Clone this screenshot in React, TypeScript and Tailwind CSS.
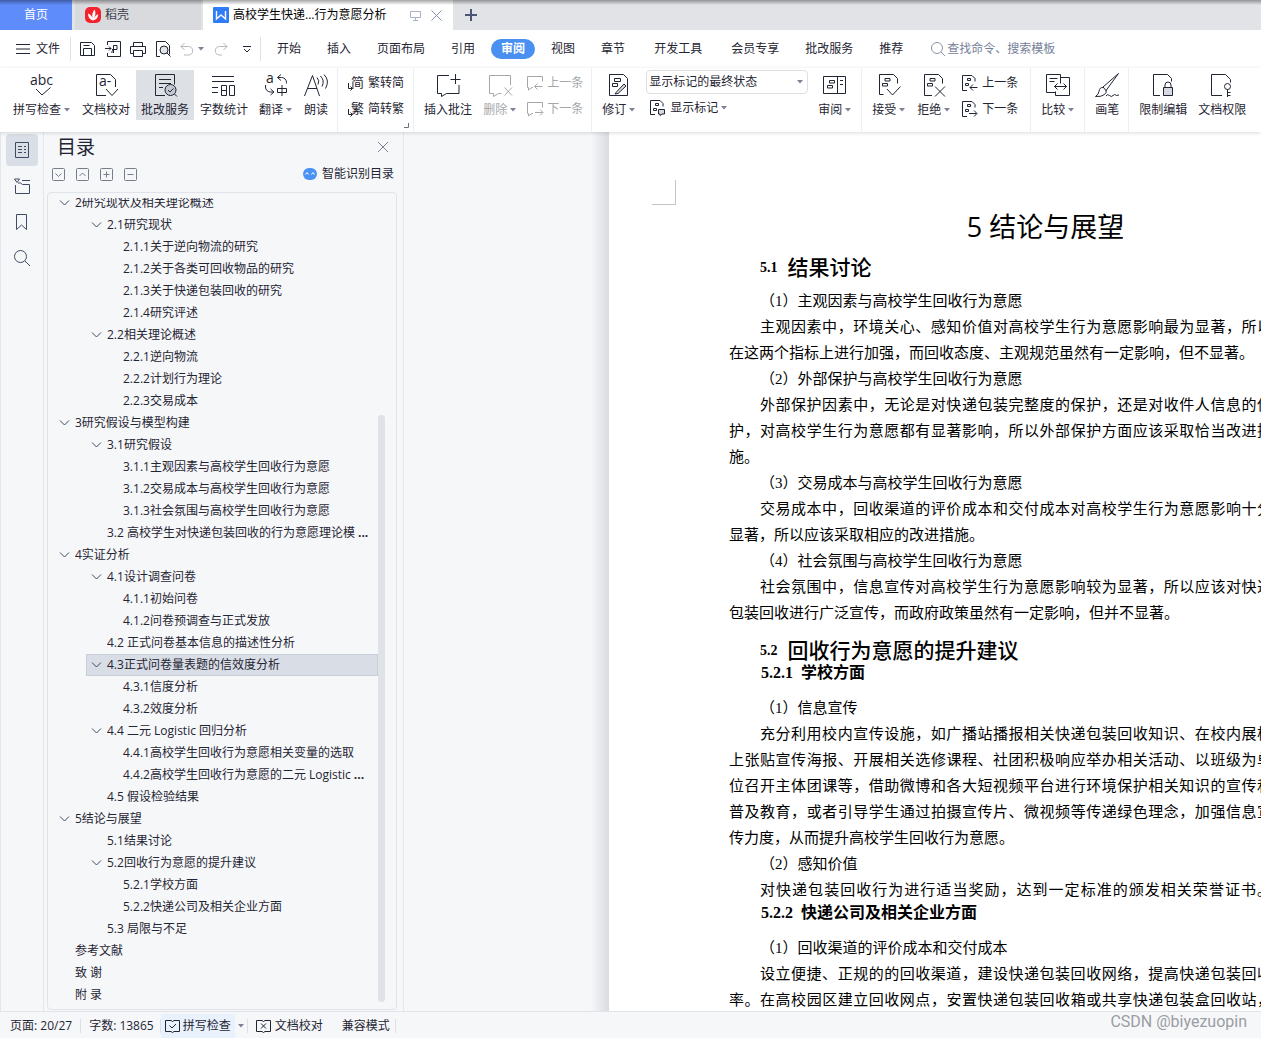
import type { ReactNode } from 'react';
import { useState } from 'react';

const tabs = ['开始', '插入', '页面布局', '引用', '审阅', '视图', '章节', '开发工具', '会员专享', '批改服务', '推荐'];

type Node = { level: number; text: string; open?: boolean; cut?: boolean };

const outline: Node[] = [
    { level: 1, text: '2研究现状及相关理论概述', open: true },
    { level: 2, text: '2.1研究现状', open: true },
    { level: 3, text: '2.1.1关于逆向物流的研究' },
    { level: 3, text: '2.1.2关于各类可回收物品的研究' },
    { level: 3, text: '2.1.3关于快递包装回收的研究' },
    { level: 3, text: '2.1.4研究评述' },
    { level: 2, text: '2.2相关理论概述', open: true },
    { level: 3, text: '2.2.1逆向物流' },
    { level: 3, text: '2.2.2计划行为理论' },
    { level: 3, text: '2.2.3交易成本' },
    { level: 1, text: '3研究假设与模型构建', open: true },
    { level: 2, text: '3.1研究假设', open: true },
    { level: 3, text: '3.1.1主观因素与高校学生回收行为意愿' },
    { level: 3, text: '3.1.2交易成本与高校学生回收行为意愿' },
    { level: 3, text: '3.1.3社会氛围与高校学生回收行为意愿' },
    { level: 2, text: '3.2 高校学生对快递包装回收的行为意愿理论模', cut: true },
    { level: 1, text: '4实证分析', open: true },
    { level: 2, text: '4.1设计调查问卷', open: true },
    { level: 3, text: '4.1.1初始问卷' },
    { level: 3, text: '4.1.2问卷预调查与正式发放' },
    { level: 2, text: '4.2 正式问卷基本信息的描述性分析' },
    { level: 2, text: '4.3正式问卷量表题的信效度分析', open: true },
    { level: 3, text: '4.3.1信度分析' },
    { level: 3, text: '4.3.2效度分析' },
    { level: 2, text: '4.4 二元 Logistic 回归分析', open: true },
    { level: 3, text: '4.4.1高校学生回收行为意愿相关变量的选取' },
    { level: 3, text: '4.4.2高校学生回收行为意愿的二元 Logistic ', cut: true },
    { level: 2, text: '4.5 假设检验结果' },
    { level: 1, text: '5结论与展望', open: true },
    { level: 2, text: '5.1结果讨论' },
    { level: 2, text: '5.2回收行为意愿的提升建议', open: true },
    { level: 3, text: '5.2.1学校方面' },
    { level: 3, text: '5.2.2快递公司及相关企业方面' },
    { level: 2, text: '5.3 局限与不足' },
    { level: 1, text: '参考文献' },
    { level: 1, text: '致 谢' },
    { level: 1, text: '附 录' },
];

const indent: Record<number, string> = { 1: '', 2: 'ml-8', 3: 'ml-12' };

const Svg = ({ w = 24, h = 24, className = '', children }: { w?: number; h?: number; className?: string; children: ReactNode }) => (
    <svg width={w} height={h} viewBox={`0 0 ${w} ${h}`} fill="none" stroke="currentColor" strokeWidth={1} className={`shrink-0 overflow-visible ${className}`} aria-hidden="true">
        {children}
    </svg>
);

const Caret = () => (
    <Svg w={7} h={4} className="ml-[3px] text-[#7b8296]">
        <path d="M0 0h6l-3 3.5z" fill="currentColor" stroke="none" />
    </Svg>
);

/* Ribbon drawings, all on a 24px grid */
const icons = {
    spell: (
        <Svg>
            <text x="0" y="12" fontSize="14" fill="currentColor" stroke="none">abc</text>
            <path d="M6 16l6 6 8.5-7.5" />
        </Svg>
    ),
    proof: (
        <Svg>
            <path d="M12 22.5H2.5v-21h14l5 5v7.5M12 16l6 6.500 6-6.500" />
            <text x="5" y="13" fontSize="14" fill="currentColor" stroke="none">a-</text>
        </Svg>
    ),
    correct: (
        <Svg>
            <path d="M12 22.5H2.5v-21h19v10M6 6.5h12M6 10.5h12M6 14.5h4" />
            <circle cx="17.5" cy="17" r="5.5" fill="#c4c9d1" />
            <path d="M15 17l2 2 3.5-3.5M21.5 21l2.5 2.5" />
        </Svg>
    ),
    count: (
        <Svg>
            <path d="M0 3.5h22M0 8.5h22M0 14.5h6M0 19.5h6M9.500 12.5h5v10h-5zM9.500 17.5h5M17.5 12.5h5v10h-5z" />
        </Svg>
    ),
    translate: (
        <Svg>
            <text x="2" y="10" fontSize="14" fill="currentColor" stroke="none">a</text>
            <path d="M17 1.5l-3.500 3 3.5 3M13.5 4.5h4a5 5 0 0 1 5 5v1M1.5 12v2a5 5 0 0 0 5 5h3M6.5 16l3.5 3-3.5 3M13.5 15.5h9v4h-9zM18 12v11" />
        </Svg>
    ),
    read: (
        <Svg>
            <path d="M0.5 23l8-20.5 7 20.5M3.5 15.5h9.500M13 4.5q3 3 1 7M16.5 3q4.5 4.500 1.5 10.5M20 1.5q6 6 1.5 14" />
        </Svg>
    ),
    comment: (
        <Svg>
            <path d="M13 2.5H1.5v18h4v3l5-3h12.500V12M19.5 1v10M14.5 6.5h10" />
        </Svg>
    ),
    remove: (
        <Svg>
            <path d="M22.5 12V2.5h-21v18h4v3l5-3h3M16.5 14.500l7.500 8M24 14.5l-7.5 8" />
        </Svg>
    ),
    revise: (
        <Svg>
            <path d="M2.5 1.5h14l4 4v17h-18zM7.5 5.500h6v3h-6zM5.5 10.5h5v3h-5z" />
            <path d="M9 19.5l8-8.500 2 2-8 7.5-3 .5z" fill="#d6dae0" />
        </Svg>
    ),
    pane: (
        <Svg>
            <path d="M0.5 3.5h22v17h-22zM14.5 3.5v17M17 7.5h3M17 11.5h3M6.5 7.5h5v2.5h-5zM4.5 12.5h5v2.5h-5z" />
        </Svg>
    ),
    accept: (
        <Svg>
            <path d="M6.5 21.5h-4v-20h14l4 4v5M8 5.5h5v2.5H8zM5.5 10.5h5v2.5h-5zM10 16l5.5 6 8-8.5" />
        </Svg>
    ),
    reject: (
        <Svg>
            <path d="M10 22.5H2.5v-21h14l4 4v5M8 5.5h5v2.5H8zM5.5 10.5h5v2.5h-5zM13 13.5l10 10M23 13.5l-10 10" />
        </Svg>
    ),
    compare: (
        <Svg>
            <path d="M10 19.5H0.5v-18h14v9M14.500 4.5h9v18h-14v-4M3.5 5.500h8M3.5 8.5h5M8.5 13.500h12M11.5 10.5l-3 3 3 3M17.500 10.5l3 3-3 3" />
        </Svg>
    ),
    pen: (
        <Svg>
            <path d="M23.5 0.5L8 14l3 3.500 12.500-17zM8.500 14.500q-4-.5-4.5 4-.5 3-3.500 5 6 .5 9-2 2.500-2 1.500-4.5M11 23q1.500-2.500 3.500-.5t3.500 0 3.500 0l2.500-.5" />
        </Svg>
    ),
    lock: (
        <Svg>
            <path d="M9 22.5H2.5v-21h14l4 4v3" />
            <path d="M12.5 14.5h9v8h-9z" fill="#d6dae0" />
            <path d="M14 14.5v-2.5a3 3 0 0 1 6 0v2.5" />
        </Svg>
    ),
    rights: (
        <Svg>
            <path d="M12 22.5H1.500v-21h14l5 5v3" />
            <circle cx="17.5" cy="13.5" r="3" />
            <path d="M17.5 16.5v7.5M17.5 19.5h3M17.5 22.5h3" />
        </Svg>
    ),
};

const prevComment = <Svg w={16} h={16}><path d="M6 12.5H5l-3.500 2.500v-2.500h-1v-11h15v5M8 11.5h7.500M10.500 8.5l-3 3 3 3" /></Svg>;
const nextComment = <Svg w={16} h={16}><path d="M6 12.5H5l-3.500 2.500v-2.500h-1v-11h15v5M8 11.5h7.500M13 8.5l3 3-3 3" /></Svg>;
const prevChange = <Svg w={16} h={16}><path d="M5 15.5H0.5v-15h9.500l3 3v3M5.5 3.5h3v2h-3zM3.5 8.5h3v2h-3zM8 12.5h7.5M11 9.500l-3 3 3 3" /></Svg>;
const nextChange = <Svg w={16} h={16}><path d="M5 15.5H0.5v-15h9.500l3 3v3M5.5 3.5h3v2h-3zM3.5 8.5h3v2h-3zM7 12.5h7.5M12 9.500l3 3-3 3" /></Svg>;
const markup = <Svg w={16} h={16}><path d="M5 14.5H0.5v-14h9.500l3 3v3M5.5 3.5h3v2h-3zM3.5 8.5h3v2h-3z" /><path d="M8.5 9.5h6v4.500h-2.500l-2 1.500v-1.500h-1.500z" fill="#d6dae0" /></Svg>;

const script = (char: string) => (
    <Svg w={16} h={16}>
        <text x="3" y="12" fontSize="13" fill="currentColor" stroke="none">{char}</text>
        <path d="M0.5 8v5.500H4M2.500 11.5l2 2-2 2" />
    </Svg>
);

const Tool = ({ icon, label, caret, active, disabled }: { icon: ReactNode; label: string; caret?: boolean; active?: boolean; disabled?: boolean }) => (
    <button disabled={disabled} className={`flex flex-col items-center gap-1 shrink-0 h-[50px] px-[5px] pt-[3px] ${active ? 'bg-[#dde1e6]' : ''} ${disabled ? 'text-[#a5a7ab]' : ''}`}>
        {icon}
        <span className="flex items-center whitespace-nowrap">{label}{caret && <Caret />}</span>
    </button>
);

const SmallTool = ({ icon, label, caret, disabled }: { icon: ReactNode; label: string; caret?: boolean; disabled?: boolean }) => (
    <button disabled={disabled} className={`flex items-center gap-1 h-[26px] whitespace-nowrap ${disabled ? 'text-[#a5a7ab]' : ''}`}>
        {icon}
        <span className="flex items-center">{label}{caret && <Caret />}</span>
    </button>
);

const Group = ({ children }: { children: ReactNode }) => (
    <div className="flex items-start gap-px shrink-0 pt-[2px] pl-[5px] pr-1 border-r border-[#eceef1]">{children}</div>
);

const TitleBar = () => (
    <header className="relative flex h-[30px] shrink-0 bg-[#e2e3e7]">
        <button className="w-[72px] bg-[#5f8cfb] text-white mr-[3px]">首页</button>
        <button className="flex items-center gap-1 w-[126px] pl-[10px] bg-[#d8dade] text-[#3c4048]">
            <Svg w={16} h={16}>
                <rect width="16" height="16" rx="5" fill="#f5222d" stroke="none" />
                <path d="M8 13.5Q3 12 3 6.5q3.5 1 4.5 5Q6.500 6 9.5 2.5q2 4-.5 9 1-3 4-4.5.5 5-5 6.500z" fill="#fff" stroke="none" />
            </Svg>
            稻壳
        </button>
        <div className="flex items-center w-[250px] ml-[2px] pl-[10px] bg-white text-black">
            <Svg w={16} h={16}>
                <rect width="16" height="16" rx="1" fill="#2f7cf6" stroke="none" />
                <path d="M3.5 4v8l4.5-4 4.5 4V4" stroke="#fff" strokeWidth="1.4" />
            </Svg>
            <span className="ml-1 whitespace-nowrap">高校学生快递...行为意愿分析</span>
            <Svg w={11} h={11} className="ml-6 text-[#aab2c5]">
                <path d="M0.5 1.5h10v6h-10zM5.5 7.5v3M3 10.5h5" />
            </Svg>
            <button aria-label="关闭文档" className="ml-[10px] text-[#8590ab]">
                <Svg w={11} h={11}><path d="M0.5 0.5l10 10M10.5 0.5l-10 10" /></Svg>
            </button>
        </div>
        <button aria-label="新建标签" className="ml-3 text-[#4a5674]">
            <Svg w={12} h={12}><path d="M6 0v12M0 6h12" strokeWidth="2" /></Svg>
        </button>
        <div className="absolute inset-x-0 top-0 h-[5px] bg-linear-to-b from-black/35 to-transparent pointer-events-none" />
    </header>
);

const MenuBar = () => {
    const [active, setActive] = useState('审阅');

    return (
        <nav className="flex items-center h-[38px] shrink-0 pl-4">
            <button className="flex items-center gap-[6px]">
                <Svg w={14} h={10}><path d="M0 0.5h14M0 5h14M0 9.5h14" /></Svg>
                文件
            </button>
            <div className="w-px h-6 ml-[10px] bg-[#dfe2e8]" />
            <div className="flex items-center gap-[9px] ml-[9px]">
                <button aria-label="保存">
                    <Svg w={16} h={16}><path d="M0.5 1.500h11l3 3v10h-14zM3.5 14.5v-7h8v7M3.5 4.5h6" /></Svg>
                </button>
                <button aria-label="输出为PDF">
                    <Svg w={16} h={16}><path d="M2.5 4V0.5h13v15h-13V12M0 7.5h6M4 5.5l2 2-2 2M8.5 12V4.5h3.5v4H7M7 12q-1-2 1.5-3" /></Svg>
                </button>
                <button aria-label="打印">
                    <Svg w={16} h={16}><path d="M3.5 5V1.5h9V5M3.5 12.5h-3V5.5h15v7h-3M3.5 9.5h9v6h-9z" /></Svg>
                </button>
                <button aria-label="打印预览">
                    <Svg w={16} h={16}>
                        <path d="M5 15.5H1.5v-15h9l4 4v9" />
                        <circle cx="9" cy="9" r="4" fill="#e1e4e8" />
                        <path d="M12 12l3.5 3.5" />
                    </Svg>
                </button>
                <button aria-label="撤销" className="flex items-center text-[#b4b7bd]">
                    <Svg w={15} h={14}><path d="M4.5 1L1 4.5 4.5 8M1 4.5h7.5a4 4 0 0 1 0 8.5H4" /></Svg>
                    <Caret />
                </button>
                <button aria-label="恢复" className="text-[#b4b7bd]">
                    <Svg w={14} h={14}><path d="M9.5 1L13 4.5 9.5 8M13 4.5H5.5a4 4 0 0 0 0 8.5H8" /></Svg>
                </button>
                <button aria-label="自定义快速访问工具栏" className="ml-[6px]">
                    <Svg w={8} h={7}><path d="M0 0.5h8M1 3l3 3 3-3" /></Svg>
                </button>
            </div>
            <div className="w-px h-6 ml-[9px] bg-[#dfe2e8]" />
            <div className="flex items-center gap-[26px] ml-4">
                {tabs.map((tab) => (
                    <button
                        key={tab}
                        onClick={() => setActive(tab)}
                        className={`whitespace-nowrap ${tab === active ? '-mx-[10px] px-[10px] h-5 rounded-full bg-[#4a90f0] text-white font-bold' : ''} ${tab === '开发工具' ? 'mx-[3px]' : ''}`}
                    >
                        {tab}
                    </button>
                ))}
            </div>
            <label className="flex items-center gap-[2px] ml-7 text-[#8c96ab]">
                <Svg w={14} h={14}><circle cx="6" cy="6" r="5.5" /><path d="M10 10l4 4" /></Svg>
                <input aria-label="查找命令" placeholder="查找命令、搜索模板" className="w-40 outline-none placeholder:text-[#76819a]" />
            </label>
        </nav>
    );
};

const Ribbon = () => (
    <div className="relative z-10 flex h-16 shrink-0 pl-[3px] bg-white shadow-[0_1px_4px_rgba(0,0,0,0.14)]">
        <Group>
            <Tool icon={icons.spell} label="拼写检查" caret />
            <Tool icon={icons.proof} label="文档校对" />
            <Tool icon={icons.correct} label="批改服务" active />
            <Tool icon={icons.count} label="字数统计" />
            <Tool icon={icons.translate} label="翻译" caret />
            <Tool icon={icons.read} label="朗读" />
        </Group>
        <Group>
            <div className="relative flex flex-col px-[5px]">
                <SmallTool icon={script('简')} label="繁转简" />
                <SmallTool icon={script('繁')} label="简转繁" />
                <Svg w={5} h={5} className="absolute right-0 -bottom-[6px] text-[#6b7280]"><path d="M4.5 0v4.5H0" /></Svg>
            </div>
        </Group>
        <Group>
            <Tool icon={icons.comment} label="插入批注" />
            <Tool icon={icons.remove} label="删除" caret disabled />
            <div className="flex flex-col px-1">
                <SmallTool icon={prevComment} label="上一条" disabled />
                <SmallTool icon={nextComment} label="下一条" disabled />
            </div>
        </Group>
        <Group>
            <Tool icon={icons.revise} label="修订" caret />
            <div className="flex flex-col gap-px px-1">
                <div className="relative">
                    <select aria-label="显示以供审阅" className="appearance-none block w-[162px] h-6 px-[2px] border border-[#dcdfe4] rounded-sm bg-white">
                        <option>显示标记的最终状态</option>
                    </select>
                    <span className="absolute right-1 top-[10px] pointer-events-none"><Caret /></span>
                </div>
                <div className="pl-1"><SmallTool icon={markup} label="显示标记" caret /></div>
            </div>
            <Tool icon={icons.pane} label="审阅" caret />
        </Group>
        <Group>
            <Tool icon={icons.accept} label="接受" caret />
            <Tool icon={icons.reject} label="拒绝" caret />
            <div className="flex flex-col pl-[5px] pr-2">
                <SmallTool icon={prevChange} label="上一条" />
                <SmallTool icon={nextChange} label="下一条" />
            </div>
        </Group>
        <Group>
            <Tool icon={icons.compare} label="比较" caret />
        </Group>
        <Group>
            <Tool icon={icons.pen} label="画笔" />
        </Group>
        <div className="flex gap-px pt-[2px] pl-[5px]">
            <Tool icon={icons.lock} label="限制编辑" />
            <Tool icon={icons.rights} label="文档权限" />
        </div>
    </div>
);

const railButton = 'flex items-center justify-center size-8 rounded-sm text-[#3f4a63]';

const Rail = () => (
    <div className="flex flex-col items-center gap-1 w-11 shrink-0 pt-[2px] border-x border-[#e3e6eb]">
        <button aria-label="目录" className={`${railButton} bg-[#dadee6]`}>
            <Svg w={16} h={16}><path d="M1.5 0.5h13v15h-13zM4 4.5h4M10 4.5h2M4 7.5h4M10 7.5h2M4 10.5h4M10 10.5h2" /></Svg>
        </button>
        <button aria-label="章节" className={railButton}>
            <Svg w={16} h={16}><path d="M0.5 1h5L3 4.5zM8 2.5h8M1.5 7v8.5h14v-9h-7l-2-1.5H4" /></Svg>
        </button>
        <button aria-label="书签" className={railButton}>
            <Svg w={12} h={16}><path d="M0.5 0.5h10v15l-5-4.5-5 4.5z" /></Svg>
        </button>
        <button aria-label="查找" className={railButton}>
            <Svg w={16} h={16}><circle cx="6.5" cy="6.5" r="6" /><path d="M11 11l5 5" /></Svg>
        </button>
    </div>
);

const levelTools = [
    { label: '展开', d: 'M3.5 5.5l3 3 3-3' },
    { label: '收起', d: 'M3.5 8l3-3 3 3' },
    { label: '升级', d: 'M3.5 6.5h6M6.5 3.5v6' },
    { label: '降级', d: 'M3.5 6.5h6' },
];

const Outline = () => {
    const [selected, setSelected] = useState(21);

    return (
        <aside className="flex flex-col w-[360px] shrink-0 pl-[3px] pr-[6px] border-r border-[#e3e6eb]">
            <div className="flex items-center justify-between h-[30px] pl-[10px] pr-[9px]">
                <h2 className="text-[19px]">目录</h2>
                <button aria-label="关闭目录" className="text-[#7d8596]">
                    <Svg w={10} h={10}><path d="M0 0l10 10M10 0L0 10" /></Svg>
                </button>
            </div>
            <div className="flex items-center gap-[11px] h-6 pl-[5px] pr-[3px]">
                {levelTools.map((tool) => (
                    <button key={tool.label} aria-label={tool.label} className="text-[#767d8b]">
                        <Svg w={13} h={13}><rect x="0.5" y="0.5" width="12" height="12" rx="1" /><path d={tool.d} /></Svg>
                    </button>
                ))}
                <button className="flex items-center gap-[5px] ml-auto">
                    <Svg w={14} h={12}>
                        <rect width="14" height="12" rx="6" fill="#4a93f5" stroke="none" />
                        <path d="M2.5 6.5l1.5-2 1.5 2M8.5 6.5l1.5-2 1.5 2" stroke="#fff" />
                    </Svg>
                    智能识别目录
                </button>
            </div>
            <div className="relative flex-1 min-h-0 mt-[6px] mb-px pt-[5px] pl-[6px] pr-[18px] border border-[#e0e3e9] rounded-sm overflow-hidden">
                <div className="h-full overflow-hidden">
                    <ul className="-mt-[6px]">
                        {outline.map((node, i) => (
                            <li key={node.text} className={indent[node.level]}>
                                <button
                                    onClick={() => setSelected(i)}
                                    className={`flex items-center w-full h-[22px] pl-[5px] border whitespace-nowrap ${i === selected ? 'bg-[#d9dde6] border-[#c8ced9]' : 'border-transparent'}`}
                                >
                                    <span className="w-[15px] shrink-0 text-[#3f4a63]">
                                        {node.open && <Svg w={9} h={6}><path d="M0 0.5l4.5 4.5L9 0.5" /></Svg>}
                                    </span>
                                    {node.text}
                                    {node.cut && <b className="ml-[3px]">...</b>}
                                </button>
                            </li>
                        ))}
                    </ul>
                </div>
                <div className="absolute right-[11px] top-[222px] bottom-[7px] w-[7px] rounded-full bg-[#dfe2e6]" />
            </div>
        </aside>
    );
};

/* `full` lines run to the right margin, the others end their paragraph */
const Line = ({ children, full, first }: { children: ReactNode; full?: boolean; first?: boolean }) => (
    <span className={`block whitespace-nowrap ${full ? 'text-justify [text-align-last:justify]' : ''} ${first ? 'pl-[31px]' : ''}`}>{children}</span>
);

const H2 = ({ no, children }: { no: string; children: ReactNode }) => (
    <h2 className="flex items-center gap-[10px] mt-[13px] pl-[31px] text-[21px] leading-6 font-medium">
        <span className="text-sm leading-6 font-bold">{no}</span>{children}
    </h2>
);

const H3 = ({ no, children }: { no: string; children: ReactNode }) => (
    <h3 className="flex gap-2 mb-3 pl-[32px] text-base leading-5 font-bold"><span>{no}</span>{children}</h3>
);

const Page = () => (
    <main className="flex-1 min-w-0 overflow-hidden pl-[187px] flex">
        <div className="w-[18px] shrink-0 bg-linear-to-r from-transparent to-[#d9dbdf]" />
        <article lang="zh-CN" className="w-[783px] shrink-0 bg-white text-black font-['Liberation_Serif','Noto_Sans_CJK_SC',serif]">
            <div className="w-6 h-[25px] mt-12 ml-[43px] border-r border-b border-[#c4c4c4]" />
            <div className="px-[120px] text-[15px] leading-[26px]">
                <h1 className="mt-[6px] pl-[90px] text-center text-[27px] leading-8 font-['Open_Sans','Noto_Sans_CJK_SC',sans-serif]">5 结论与展望</h1>
                <H2 no="5.1">结果讨论</H2>
                <div className="mt-2">
                    <p><Line first>（1）主观因素与高校学生回收行为意愿</Line></p>
                    <p>
                        <Line first full>主观因素中，环境关心、感知价值对高校学生行为意愿影响最为显著，所以</Line>
                        <Line>在这两个指标上进行加强，而回收态度、主观规范虽然有一定影响，但不显著。</Line>
                    </p>
                    <p><Line first>（2）外部保护与高校学生回收行为意愿</Line></p>
                    <p>
                        <Line first full>外部保护因素中，无论是对快递包装完整度的保护，还是对收件人信息的保</Line>
                        <Line full>护，对高校学生行为意愿都有显著影响，所以外部保护方面应该采取恰当改进措</Line>
                        <Line>施。</Line>
                    </p>
                    <p><Line first>（3）交易成本与高校学生回收行为意愿</Line></p>
                    <p>
                        <Line first full>交易成本中，回收渠道的评价成本和交付成本对高校学生行为意愿影响十分</Line>
                        <Line>显著，所以应该采取相应的改进措施。</Line>
                    </p>
                    <p><Line first>（4）社会氛围与高校学生回收行为意愿</Line></p>
                    <p>
                        <Line first full>社会氛围中，信息宣传对高校学生行为意愿影响较为显著，所以应该对快递</Line>
                        <Line>包装回收进行广泛宣传，而政府政策虽然有一定影响，但并不显著。</Line>
                    </p>
                </div>
                <H2 no="5.2">回收行为意愿的提升建议</H2>
                <H3 no="5.2.1">学校方面</H3>
                <p><Line first>（1）信息宣传</Line></p>
                <p>
                    <Line first full>充分利用校内宣传设施，如广播站播报相关快递包装回收知识、在校内展板</Line>
                    <Line full>上张贴宣传海报、开展相关选修课程、社团积极响应举办相关活动、以班级为单</Line>
                    <Line full>位召开主体团课等，借助微博和各大短视频平台进行环境保护相关知识的宣传和</Line>
                    <Line full>普及教育，或者引导学生通过拍摄宣传片、微视频等传递绿色理念，加强信息宣</Line>
                    <Line>传力度，从而提升高校学生回收行为意愿。</Line>
                </p>
                <p><Line first>（2）感知价值</Line></p>
                <p><Line first full>对快递包装回收行为进行适当奖励，达到一定标准的颁发相关荣誉证书。</Line></p>
                <H3 no="5.2.2">快递公司及相关企业方面</H3>
                <p><Line first>（1）回收渠道的评价成本和交付成本</Line></p>
                <p>
                    <Line first full>设立便捷、正规的的回收渠道，建设快递包装回收网络，提高快递包装回收</Line>
                    <Line full>率。在高校园区建立回收网点，安置快递包装回收箱或共享快递包装盒回收站，</Line>
                </p>
            </div>
        </article>
    </main>
);

const StatusBar = () => (
    <footer className="flex items-center h-[27px] shrink-0 pt-[2px] pl-[10px] pr-[14px] bg-[#f6f7f9] border-t border-[#e0e3e9] whitespace-nowrap">
        <span>页面: 20/27</span>
        <div className="w-px h-[14px] mx-2 bg-[#dcdfe5]" />
        <span>字数: 13865</span>
        <div className="w-px h-[14px] ml-[6px] bg-[#dcdfe5]" />
        <button className="flex items-center gap-[3px] h-6 px-1 bg-[#e8f1fc]">
            <Svg w={15} h={14}><path d="M6 1.5H0.5v11H6l1.5 1 1.5-1h5.500v-11H9l-1.5 1zM4.5 6.5L7 9l4-4" /></Svg>
            拼写检查
        </button>
        <button aria-label="拼写检查选项"><Caret /></button>
        <div className="w-px h-[14px] mx-[2px] bg-[#dcdfe5]" />
        <button className="flex items-center gap-1 ml-[6px]">
            <Svg w={15} h={14}><path d="M6 1.5H0.5v11H6l1.5 1 1.5-1h5.500v-11H9l-1.5 1zM5 4.5l5 5M10 4.5l-5 5" /></Svg>
            文档校对
        </button>
        <span className="ml-[19px]">兼容模式</span>
        <div className="w-px h-[14px] ml-[5px] bg-[#dcdfe5]" />
        <span className="ml-auto mb-2 text-base leading-5 text-[#9a9da3] font-[Roboto,sans-serif]">CSDN @biyezuopin</span>
    </footer>
);

const App = () => (
    <div className="flex flex-col h-screen overflow-hidden bg-white text-xs leading-[18px] text-[#1f2533] font-['Open_Sans','Noto_Sans_CJK_SC',sans-serif]">
        <TitleBar />
        <MenuBar />
        <Ribbon />
        <div className="flex flex-1 min-h-0 bg-[#f6f7f9]">
            <Rail />
            <Outline />
            <Page />
        </div>
        <StatusBar />
    </div>
);

export default App;
